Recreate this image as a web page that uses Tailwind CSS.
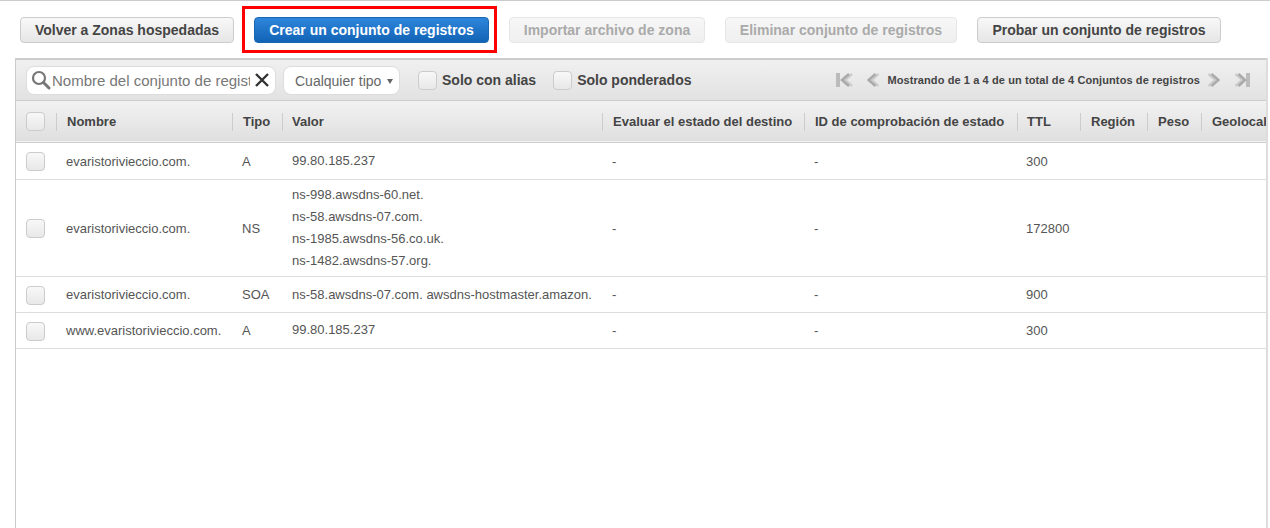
<!DOCTYPE html>
<html lang="en">
<head>
  <meta charset="UTF-8" />
  <title>Conjuntos de registros</title>
  <script src="https://cdn.jsdelivr.net/npm/@tailwindcss/browser@4"></script>
</head>
<body class="bg-white h-[528px] overflow-hidden font-['Liberation_Sans',Arial,sans-serif] text-[#444]">
  <div class="border-t border-[#ccc] pt-[5px] pl-5 flex items-start h-[53px]">
    <button class="mt-[11px] h-[26px] w-[214px] rounded-[4px] border border-[#ccc] bg-linear-to-b from-[#f8f8f8] to-[#e6e6e6] text-sm font-bold text-[#444]">Volver a Zonas hospedadas</button>
    <div class="ml-2 border-[3px] border-[#f00] w-[255px] h-[47px] pt-2 pl-[9px]">
      <button class="h-[26px] w-[235px] rounded-[4px] border border-[#1a66b0] bg-linear-to-b from-[#2e86dc] to-[#1163b5] text-sm font-bold text-white">Crear un conjunto de registros</button>
    </div>
    <button class="ml-3 mt-[11px] h-[26px] w-[196px] rounded-[4px] border border-[#e6e6e6] bg-linear-to-b from-[#f7f7f7] to-[#efefef] text-sm font-bold text-[#aaa]">Importar archivo de zona</button>
    <button class="ml-5 mt-[11px] h-[26px] w-[232px] rounded-[4px] border border-[#e6e6e6] bg-linear-to-b from-[#f7f7f7] to-[#efefef] text-sm font-bold text-[#aaa]">Eliminar conjunto de registros</button>
    <button class="ml-5 mt-[11px] h-[26px] w-[244px] rounded-[4px] border border-[#ccc] bg-linear-to-b from-[#f8f8f8] to-[#e6e6e6] text-sm font-bold text-[#444]">Probar un conjunto de registros</button>
  </div>

  <div class="mt-[5px] ml-[15px] w-[1253px] h-[470px] border-t-2 border-t-[#ccc] border-l border-l-[#ccc] border-r-2 border-r-[#ddd] overflow-hidden">
    <!-- toolbar -->
    <div class="h-[41px] flex items-center pl-2.5 pr-4 bg-linear-to-b from-[#f0f0f0] to-[#e2e2e2] border-b border-[#ccc]">
      <div class="w-[250px] h-[29px] flex items-center bg-white border border-[#ddd] rounded-lg pl-1">
        <svg class="w-[20px] h-[20px] shrink-0" viewBox="0 0 20 20" fill="none" stroke="#777"><circle cx="8" cy="8" r="6" stroke-width="2.2"/><path d="M12.5 12.5l5.5 5.5" stroke-width="3" stroke-linecap="round"/></svg>
        <input class="ml-px mt-0.5 w-[198px] text-[15px] text-[#777] placeholder:text-[#777] outline-none" placeholder="Nombre del conjunto de registros" />
        <svg class="ml-1 w-[16px] h-[16px] shrink-0" viewBox="0 0 16 16" fill="none" stroke="#333" stroke-width="2.4"><path d="M2 2l12 12M14 2L2 14"/></svg>
      </div>
      <div class="ml-[7px] w-[117px] h-[29px] flex items-center bg-white border border-[#ddd] rounded-lg pl-[11px] pt-0.5 text-sm text-[#666]">
        Cualquier tipo
        <span class="ml-[6px] w-0 h-0 border-x-[3px] border-x-transparent border-t-[5px] border-t-[#666]"></span>
      </div>
      <span class="ml-[18px] w-[19px] h-[19px] rounded-[4px] border border-[#ccc] bg-linear-to-b from-[#f8f8f8] to-[#e8e8e8]"></span>
      <span class="ml-[5px] text-sm font-bold">Solo con alias</span>
      <span class="ml-[17px] w-[19px] h-[19px] rounded-[4px] border border-[#ccc] bg-linear-to-b from-[#f8f8f8] to-[#e8e8e8]"></span>
      <span class="ml-[5px] text-sm font-bold">Solo ponderados</span>
      <div class="ml-auto flex items-center">
        <svg class="w-[17px] h-[14px]" viewBox="0 0 17 14"><path d="M0 0h4v14H0z" fill="#bbb"/><path d="M16 1L9 7l7 6" fill="none" stroke="#ccc" stroke-width="2.5"/><path d="M13 1L6 7l7 6" fill="none" stroke="#aaa" stroke-width="2.5"/></svg>
        <svg class="ml-[14px] w-[12px] h-[14px]" viewBox="0 0 12 14"><path d="M11.5 1L4.5 7l7 6" fill="none" stroke="#ccc" stroke-width="2.5"/><path d="M8.5 1L1.5 7l7 6" fill="none" stroke="#aaa" stroke-width="2.5"/></svg>
        <span class="ml-2 text-[11px] font-bold tracking-[0.1px]">Mostrando de 1 a 4 de un total de 4 Conjuntos de registros</span>
        <svg class="ml-2 w-[12px] h-[14px]" viewBox="0 0 12 14"><path d="M0.5 1l7 6-7 6" fill="none" stroke="#ccc" stroke-width="2.5"/><path d="M3.5 1l7 6-7 6" fill="none" stroke="#aaa" stroke-width="2.5"/></svg>
        <svg class="ml-[15px] w-[15px] h-[14px]" viewBox="0 0 15 14"><path d="M11 0h4v14h-4z" fill="#bbb"/><path d="M0.5 1l7 6-7 6" fill="none" stroke="#ccc" stroke-width="2.5"/><path d="M3.5 1l6.5 6-6.5 6" fill="none" stroke="#aaa" stroke-width="2.5"/></svg>
      </div>
    </div>

    <table class="table-fixed w-[1252px] border-collapse text-[13px] text-[#555]">
      <colgroup>
        <col class="w-[40px]" /><col class="w-[176px]" /><col class="w-[50px]" /><col class="w-[320px]" /><col class="w-[202px]" /><col class="w-[213px]" /><col class="w-[63px]" /><col class="w-[67px]" /><col class="w-[54px]" /><col class="w-[67px]" />
      </colgroup>
      <thead>
        <tr class="h-[41px] bg-linear-to-b from-[#f2f2f2] to-[#dfdfdf] border-b border-[#ccc] text-[13px] font-bold text-left text-[#444]">
          <th class="pl-2.5 font-normal"><span class="block w-[19px] h-[19px] rounded-[4px] border border-[#ccc] bg-linear-to-b from-[#f8f8f8] to-[#e8e8e8]"></span></th>
          <th class="relative pl-[11px] whitespace-nowrap"><span class="absolute left-0 top-[12px] h-[18px] border-l border-[#ccc]"></span>Nombre</th>
          <th class="relative pl-[11px] whitespace-nowrap"><span class="absolute left-0 top-[12px] h-[18px] border-l border-[#ccc]"></span>Tipo</th>
          <th class="relative pl-[10px] whitespace-nowrap"><span class="absolute left-0 top-[12px] h-[18px] border-l border-[#ccc]"></span>Valor</th>
          <th class="relative pl-[11px] whitespace-nowrap"><span class="absolute left-0 top-[12px] h-[18px] border-l border-[#ccc]"></span>Evaluar el estado del destino</th>
          <th class="relative pl-[11px] whitespace-nowrap"><span class="absolute left-0 top-[12px] h-[18px] border-l border-[#ccc]"></span>ID de comprobación de estado</th>
          <th class="relative pl-[10px] whitespace-nowrap"><span class="absolute left-0 top-[12px] h-[18px] border-l border-[#ccc]"></span>TTL</th>
          <th class="relative pl-[11px] whitespace-nowrap"><span class="absolute left-0 top-[12px] h-[18px] border-l border-[#ccc]"></span>Región</th>
          <th class="relative pl-[11px] whitespace-nowrap"><span class="absolute left-0 top-[12px] h-[18px] border-l border-[#ccc]"></span>Peso</th>
          <th class="relative pl-[11px] whitespace-nowrap overflow-hidden"><span class="absolute left-0 top-[12px] h-[18px] border-l border-[#ccc]"></span>Geolocalización</th>
        </tr>
      </thead>
      <tbody>
        <tr class="h-[37px] border-b border-[#ddd]">
          <td class="pl-2.5 pt-0.5"><span class="block w-[19px] h-[19px] rounded-[4px] border border-[#ccc] bg-linear-to-b from-[#f8f8f8] to-[#e8e8e8]"></span></td>
          <td class="pl-[10px] pt-0.5 whitespace-nowrap">evaristorivieccio.com.</td>
          <td class="pl-2.5 pt-0.5">A</td>
          <td class="pl-2.5">99.80.185.237</td>
          <td class="pl-2.5 pt-0.5">-</td>
          <td class="pl-2.5 pt-0.5">-</td>
          <td class="pl-[9px] pt-0.5">300</td>
          <td></td><td></td><td></td>
        </tr>
        <tr class="h-[97px] border-b border-[#ddd]">
          <td class="pl-2.5 pt-0.5"><span class="block w-[19px] h-[19px] rounded-[4px] border border-[#ccc] bg-linear-to-b from-[#f8f8f8] to-[#e8e8e8]"></span></td>
          <td class="pl-[10px] pt-0.5 whitespace-nowrap">evaristorivieccio.com.</td>
          <td class="pl-2.5 pt-0.5">NS</td>
          <td class="pl-2.5 leading-[22px] pt-px">ns-998.awsdns-60.net.<br />ns-58.awsdns-07.com.<br />ns-1985.awsdns-56.co.uk.<br />ns-1482.awsdns-57.org.</td>
          <td class="pl-2.5 pt-0.5">-</td>
          <td class="pl-2.5 pt-0.5">-</td>
          <td class="pl-[9px] pt-0.5">172800</td>
          <td></td><td></td><td></td>
        </tr>
        <tr class="h-[36px] border-b border-[#ddd]">
          <td class="pl-2.5 pt-0.5"><span class="block w-[19px] h-[19px] rounded-[4px] border border-[#ccc] bg-linear-to-b from-[#f8f8f8] to-[#e8e8e8]"></span></td>
          <td class="pl-[10px] pt-0.5 whitespace-nowrap">evaristorivieccio.com.</td>
          <td class="pl-2.5 pt-0.5">SOA</td>
          <td class="pl-2.5 pt-0.5 whitespace-nowrap">ns-58.awsdns-07.com. awsdns-hostmaster.amazon.</td>
          <td class="pl-2.5 pt-0.5">-</td>
          <td class="pl-2.5 pt-0.5">-</td>
          <td class="pl-[9px] pt-0.5">900</td>
          <td></td><td></td><td></td>
        </tr>
        <tr class="h-[36px] border-b border-[#ddd]">
          <td class="pl-2.5 pt-0.5"><span class="block w-[19px] h-[19px] rounded-[4px] border border-[#ccc] bg-linear-to-b from-[#f8f8f8] to-[#e8e8e8]"></span></td>
          <td class="pl-[10px] pt-0.5 whitespace-nowrap">www.evaristorivieccio.com.</td>
          <td class="pl-2.5 pt-0.5">A</td>
          <td class="pl-2.5">99.80.185.237</td>
          <td class="pl-2.5 pt-0.5">-</td>
          <td class="pl-2.5 pt-0.5">-</td>
          <td class="pl-[9px] pt-0.5">300</td>
          <td></td><td></td><td></td>
        </tr>
      </tbody>
    </table>
  </div>
</body>
</html>
